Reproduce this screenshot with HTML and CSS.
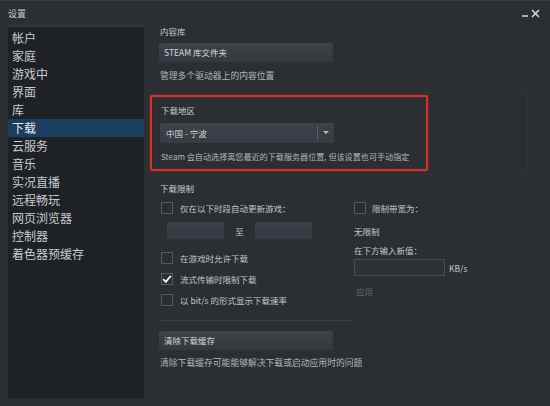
FILE: index.html
```html
<!DOCTYPE html>
<html lang="zh-CN">
<head>
    <meta charset="UTF-8">
    <title>设置</title>
    <link rel="stylesheet" href="styles.css">
</head>
<body>

<div class="window">
    <!-- title bar -->
    <div class="titlebar">
        <span class="title">设置</span>
        <div class="win-controls">
            <span class="min-btn"></span>
            <svg class="close-btn" width="9" height="9" viewBox="0 0 9 9">
                <path d="M1 1 L8 8 M8 1 L1 8" stroke="#d4d6d9" stroke-width="1.6"/>
            </svg>
        </div>
    </div>

    <div class="main">
        <!-- left menu -->
        <ul class="sidebar">
            <li>帐户</li>
            <li>家庭</li>
            <li>游戏中</li>
            <li>界面</li>
            <li>库</li>
            <li class="active">下载</li>
            <li>云服务</li>
            <li>音乐</li>
            <li>实况直播</li>
            <li>远程畅玩</li>
            <li>网页浏览器</li>
            <li>控制器</li>
            <li>着色器预缓存</li>
        </ul>

        <!-- settings page -->
        <div class="content">
            <div class="label">内容库</div>
            <div class="btn">STEAM 库文件夹</div>
            <div class="desc">管理多个驱动器上的内容位置</div>

            <div class="region-box">
                <div class="highlight"></div>
                <div class="label">下载地区</div>
                <div class="dropdown">
                    <span>中国 - 宁波</span>
                    <span class="drop-arrow"></span>
                </div>
                <div class="desc region-desc">Steam 会自动选择离您最近的下载服务器位置, 但该设置也可手动指定</div>
            </div>

            <div class="label limit-title">下载限制</div>
            <div class="limit-cols">
                <div class="col-left">
                    <div class="check-row">
                        <span class="checkbox"></span>
                        <span>仅在以下时段自动更新游戏：</span>
                    </div>
                    <div class="time-row">
                        <span class="time-box"></span>
                        <span class="to">至</span>
                        <span class="time-box"></span>
                    </div>
                    <div class="check-row gap-big">
                        <span class="checkbox"></span>
                        <span>在游戏时允许下载</span>
                    </div>
                    <div class="check-row">
                        <span class="checkbox checked">
                            <svg width="12" height="12" viewBox="0 0 12 12">
                                <path d="M2.2 6.2 L4.8 8.8 L9.8 2.8" fill="none" stroke="#f2f3f4" stroke-width="1.8"/>
                            </svg>
                        </span>
                        <span>流式传输时限制下载</span>
                    </div>
                    <div class="check-row">
                        <span class="checkbox"></span>
                        <span>以 bit/s 的形式显示下载速率</span>
                    </div>
                </div>
                <div class="col-right">
                    <div class="check-row">
                        <span class="checkbox"></span>
                        <span>限制带宽为：</span>
                    </div>
                    <div class="plain unlimited">无限制</div>
                    <div class="plain new-value">在下方输入新值：</div>
                    <div class="kb-row">
                        <span class="kb-input"></span>
                        <span>KB/s</span>
                    </div>
                    <div class="plain apply">应用</div>
                </div>
            </div>

            <div class="separator"></div>
            <div class="btn cache-btn">清除下载缓存</div>
            <div class="desc cache-desc">清除下载缓存可能能够解决下载或启动应用时的问题</div>
        </div>
    </div>
</div>

</body>
</html>
```

FILE: styles.css
```css
body {
    margin: 0;
    padding: 0;
    background: #2b2e33;
    font-family: "Noto Sans CJK SC", "Noto Sans", sans-serif;
}

.window {
    width: 550px;
    height: 406px;
    background: #2b2e33;
    color: #c3c5c9;
    overflow: hidden;
}

.titlebar {
    height: 24px;
    display: flex;
    justify-content: space-between;
    align-items: center;
    padding: 0 10px 0 8px;
    box-sizing: border-box;
    border-top: 1px solid #3a3d43;
}

.title {
    font-size: 9px;
    color: #c8cacd;
    margin-top: 2px;
}

.win-controls {
    display: flex;
    align-items: center;
    gap: 3px;
    margin-top: 1px;
}

.min-btn {
    width: 6px;
    height: 2px;
    background: #aeb1b5;
    margin-top: 6px;
}

.main {
    display: flex;
    height: 382px;
}

/* left menu */
.sidebar {
    list-style: none;
    margin: 1px 0 0 8px;
    padding: 2px 0 0 0;
    width: 136px;
    height: 373px;
    box-sizing: border-box;
    background: #1e2125;
    border-top: 2px solid #34373d;
}

.sidebar li {
    font-size: 12px;
    line-height: 18px;
    padding-left: 4px;
    color: #c9cbce;
}

.sidebar li.active {
    background: #1b3e60;
    color: #e4e6e8;
}

/* settings page */
.content {
    flex: 1;
    padding-left: 15px;
}

.label {
    font-size: 8.5px;
    line-height: 14px;
    color: #c9cbce;
    padding-left: 1px;
}

.desc {
    font-size: 8.8px;
    line-height: 14px;
    color: #b3b6ba;
    margin-top: 7px;
    padding-left: 1px;
}

.btn {
    width: 174px;
    height: 19px;
    margin-top: 5px;
    background: linear-gradient(#3e4248, #35383e);
    border-radius: 2px;
    font-size: 8.5px;
    line-height: 19px;
    padding-left: 5px;
    box-sizing: border-box;
    color: #d4d6d9;
}

.region-box {
    position: relative;
    width: 373px;
    margin: 9px 0 0 -4px;
    padding: 10px 3px 10px 4px;
    border: 1px solid #303339;
    box-sizing: border-box;
}

.highlight {
    position: absolute;
    left: -6px;
    top: 2px;
    width: 278px;
    height: 76px;
    border: 2px solid #d8302b;
    border-radius: 2px;
    box-sizing: border-box;
    box-shadow: 0 0 2px rgba(216, 48, 43, 0.6);
}

.region-desc {
    font-size: 8.1px;
    white-space: nowrap;
}

.dropdown {
    display: flex;
    justify-content: space-between;
    align-items: center;
    width: 174px;
    height: 20px;
    margin-top: 6px;
    background: linear-gradient(#3f4349, #373a40);
    border-radius: 2px;
    font-size: 8.5px;
    color: #d4d6d9;
    padding-left: 6px;
    box-sizing: border-box;
}

.drop-arrow {
    width: 16px;
    height: 14px;
    border-left: 1px solid #5c6067;
    position: relative;
}

.drop-arrow::after {
    content: "";
    position: absolute;
    left: 5px;
    top: 5px;
    border-left: 3px solid transparent;
    border-right: 3px solid transparent;
    border-top: 3px solid #b9bcc0;
}

.limit-title {
    margin-top: 6px;
}

.limit-cols {
    display: flex;
    margin-top: 6px;
}

.col-left {
    width: 195px;
}

.check-row {
    display: flex;
    align-items: center;
    gap: 7px;
    height: 14px;
    font-size: 8.5px;
    color: #c3c5c9;
    padding-left: 2px;
}

.col-left .check-row + .check-row {
    margin-top: 7px;
}

.col-left .check-row.gap-big {
    margin-top: 12px;
}

.col-right .check-row {
    padding-left: 0;
    gap: 6px;
}

.checkbox {
    width: 12px;
    height: 12px;
    border: 1px solid #575b61;
    box-sizing: border-box;
    display: flex;
    align-items: center;
    justify-content: center;
    background: #2a2d32;
}

.checkbox svg {
    flex: none;
}

.time-row {
    display: flex;
    align-items: center;
    margin: 7px 0 0 8px;
    height: 17px;
    font-size: 8.5px;
}

.time-box {
    width: 57px;
    height: 17px;
    background: linear-gradient(#3d4147, #363940);
    border-radius: 1px;
}

.to {
    width: 31px;
    text-align: center;
    color: #c3c5c9;
}

.plain {
    font-size: 8.5px;
    line-height: 14px;
    color: #c3c5c9;
}

.unlimited {
    margin-top: 9px;
}

.new-value {
    margin-top: 5px;
}

.kb-row {
    display: flex;
    align-items: center;
    gap: 4px;
    margin-top: 2px;
    font-size: 8.5px;
    color: #c3c5c9;
}

.kb-input {
    width: 91px;
    height: 17px;
    border: 1px solid #4a4e55;
    background: #2e3137;
    box-sizing: border-box;
}

.apply {
    margin-top: 8px;
    padding-left: 2px;
    color: #62666c;
}

.separator {
    width: 192px;
    height: 1px;
    margin: 13px 0 0 1px;
    background: #3d4046;
}

.cache-btn {
    margin-top: 10px;
}

.cache-desc {
    margin-top: 6px;
}
```
